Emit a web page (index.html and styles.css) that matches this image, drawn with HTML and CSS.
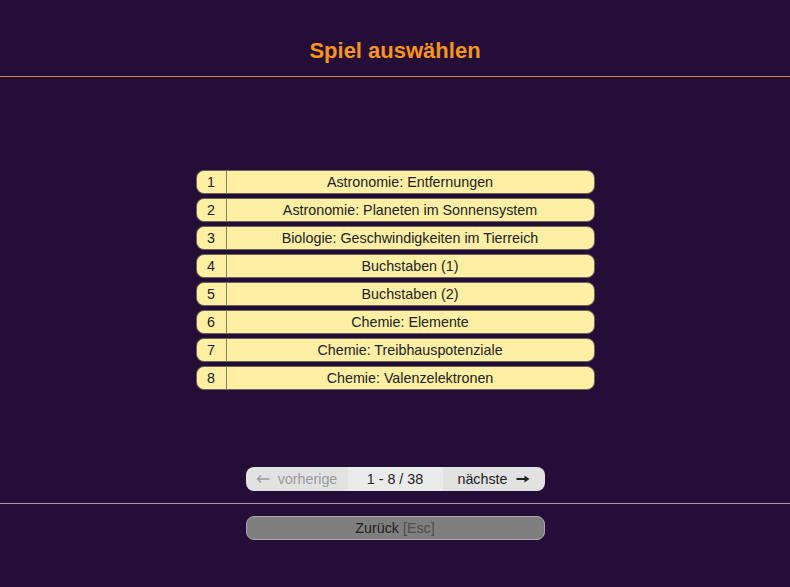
FILE: index.html
```html
<!DOCTYPE html>
<html lang="de">
<head>
    <meta charset="UTF-8">
    <title>Spiel auswählen</title>
    <link rel="stylesheet" href="styles.css">
</head>
<body>
    <header class="top">
        <h1>Spiel auswählen</h1>
    </header>
    <main class="content">
        <ul class="games">
            <li class="game"><span class="num">1</span><span class="name">Astronomie: Entfernungen</span></li>
            <li class="game"><span class="num">2</span><span class="name">Astronomie: Planeten im Sonnensystem</span></li>
            <li class="game"><span class="num">3</span><span class="name">Biologie: Geschwindigkeiten im Tierreich</span></li>
            <li class="game"><span class="num">4</span><span class="name">Buchstaben (1)</span></li>
            <li class="game"><span class="num">5</span><span class="name">Buchstaben (2)</span></li>
            <li class="game"><span class="num">6</span><span class="name">Chemie: Elemente</span></li>
            <li class="game"><span class="num">7</span><span class="name">Chemie: Treibhauspotenziale</span></li>
            <li class="game"><span class="num">8</span><span class="name">Chemie: Valenzelektronen</span></li>
        </ul>

        <div class="pager">
            <span class="prev">
                <svg class="arrow" width="14" height="10" viewBox="0 0 14 10"><path d="M13.5 5H1.5M5 1.5L1.5 5L5 8.5" fill="none" stroke="currentColor" stroke-width="1.3"/></svg>
                vorherige
            </span>
            <span class="count">1 - 8 / 38</span>
            <span class="next">
                nächste
                <svg class="arrow" width="14" height="10" viewBox="0 0 14 10"><path d="M0.5 5H11.5" stroke="currentColor" stroke-width="2"/><path d="M8.5 1.5L13.5 5L8.5 8.5Z" fill="currentColor"/></svg>
            </span>
        </div>
    </main>
    <footer class="bottom">
        <button class="back">Zurück <span class="key">[Esc]</span></button>
    </footer>
</body>
</html>
```

FILE: styles.css
```css
body {
    font-family: "Liberation Sans", Arial, sans-serif;
    margin: 0;
    padding: 0;
    background: #240e37;
    color: #222;
    height: 587px;
    overflow: hidden;
}
.top {
    height: 76px;
    border-bottom: 1px solid #d08a45;
    text-align: center;
}
.top h1 {
    margin: 0;
    padding-top: 38px;
    font-size: 22px;
    line-height: 26px;
    color: #f7941d;
}
.content {
    height: 426px;
    border-bottom: 1px solid #a896a8;
    display: flex;
    flex-direction: column;
    align-items: center;
}
.games {
    list-style: none;
    margin: 93px 0 0;
    padding: 0;
    width: 399px;
    display: flex;
    flex-direction: column;
    gap: 4px;
}
.game {
    display: flex;
    height: 22px;
    background: #ffefa4;
    border: 1px solid #6e6552;
    border-radius: 8px;
    font-size: 14.3px;
    line-height: 23px;
    color: #222;
}
.num {
    width: 29px;
    text-align: center;
    border-right: 1px solid #8b8266;
}
.name {
    flex: 1;
    text-align: center;
}
.pager {
    margin-top: 77px;
    width: 299px;
    height: 24px;
    display: flex;
    background: #e2e2e2;
    border-radius: 8px;
    font-size: 14.3px;
    line-height: 24px;
    overflow: hidden;
}
.prev, .next {
    width: 102px;
    display: flex;
    align-items: center;
    justify-content: center;
    gap: 8px;
}
.prev {
    color: #9a9a9a;
}
.next {
    color: #222;
}
.count {
    flex: 1;
    text-align: center;
    background: #ebebeb;
    color: #222;
}
.bottom {
    display: flex;
    justify-content: center;
    padding-top: 12px;
}
.back {
    width: 299px;
    height: 24px;
    background: #7f7f7f;
    border: 1px solid #a8a8a8;
    border-radius: 8px;
    font-family: "Liberation Sans", Arial, sans-serif;
    font-size: 14.3px;
    color: #222;
    padding: 0;
    cursor: pointer;
}
.key {
    color: #4e4e4e;
}
```
